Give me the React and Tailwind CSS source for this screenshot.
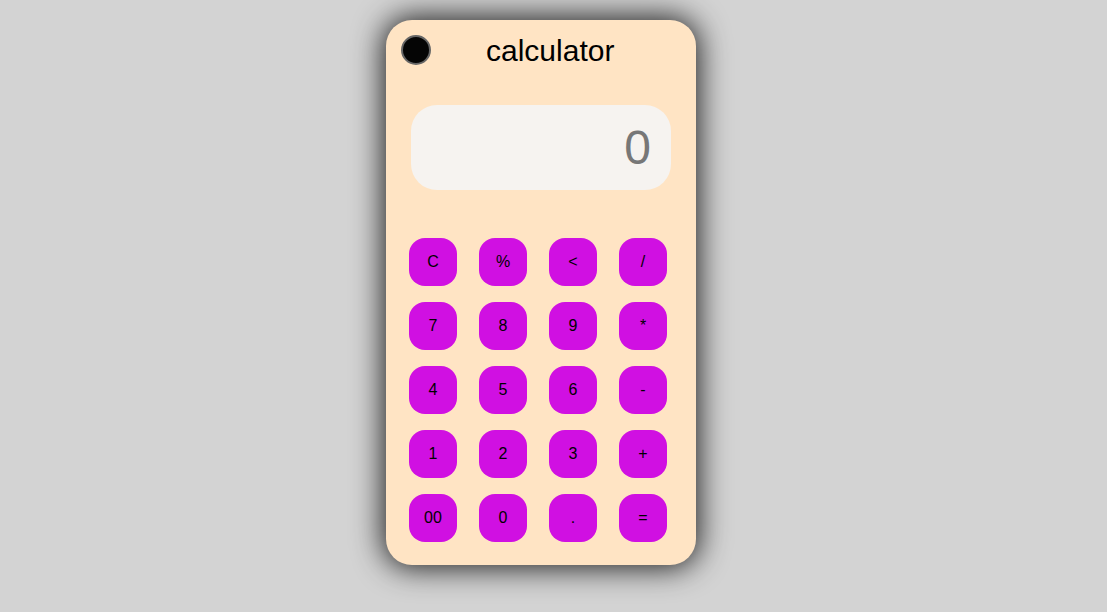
export default function App() {
  const keys = ["C", "%", "<", "/", "7", "8", "9", "*", "4", "5", "6", "-", "1", "2", "3", "+", "00", "0", ".", "="];
  return (
    <div className="w-[1107px] h-[612px] bg-[#d3d3d3] flex justify-center pt-[20px] pr-[25px]" style={{ fontFamily: '"Liberation Sans", Arial, sans-serif' }}>
      <div className="w-[310px] h-[545px] bg-[#ffe4c4] rounded-[26px] shadow-[0_0_30px_3px_rgba(0,0,0,0.85)] flex flex-col">
        <div className="flex items-center h-[30px] mt-[15px] ml-[15px]">
          <div className="w-[30px] h-[30px] rounded-full bg-[#050505] border-2 border-[#666]"></div>
          <div className="text-[30px] leading-none text-black ml-[55px] mt-[2px]">calculator</div>
        </div>
        <div className="mt-[40px] mx-[25px] h-[85px] rounded-[26px] bg-[#f6f3f0] flex items-center justify-end pr-[20px]">
          <span className="text-[48px] leading-none text-[#777777]">0</span>
        </div>
        <div className="mt-[48px] ml-[23px] grid grid-cols-[48px_48px_48px_48px] gap-x-[22px] gap-y-[16px]">
          {keys.map((k) => (
            <button key={k} className="w-[48px] h-[48px] rounded-[16px] bg-[#d010e2] text-black text-[16px] flex items-center justify-center">
              {k}
            </button>
          ))}
        </div>
      </div>
    </div>
  );
}
